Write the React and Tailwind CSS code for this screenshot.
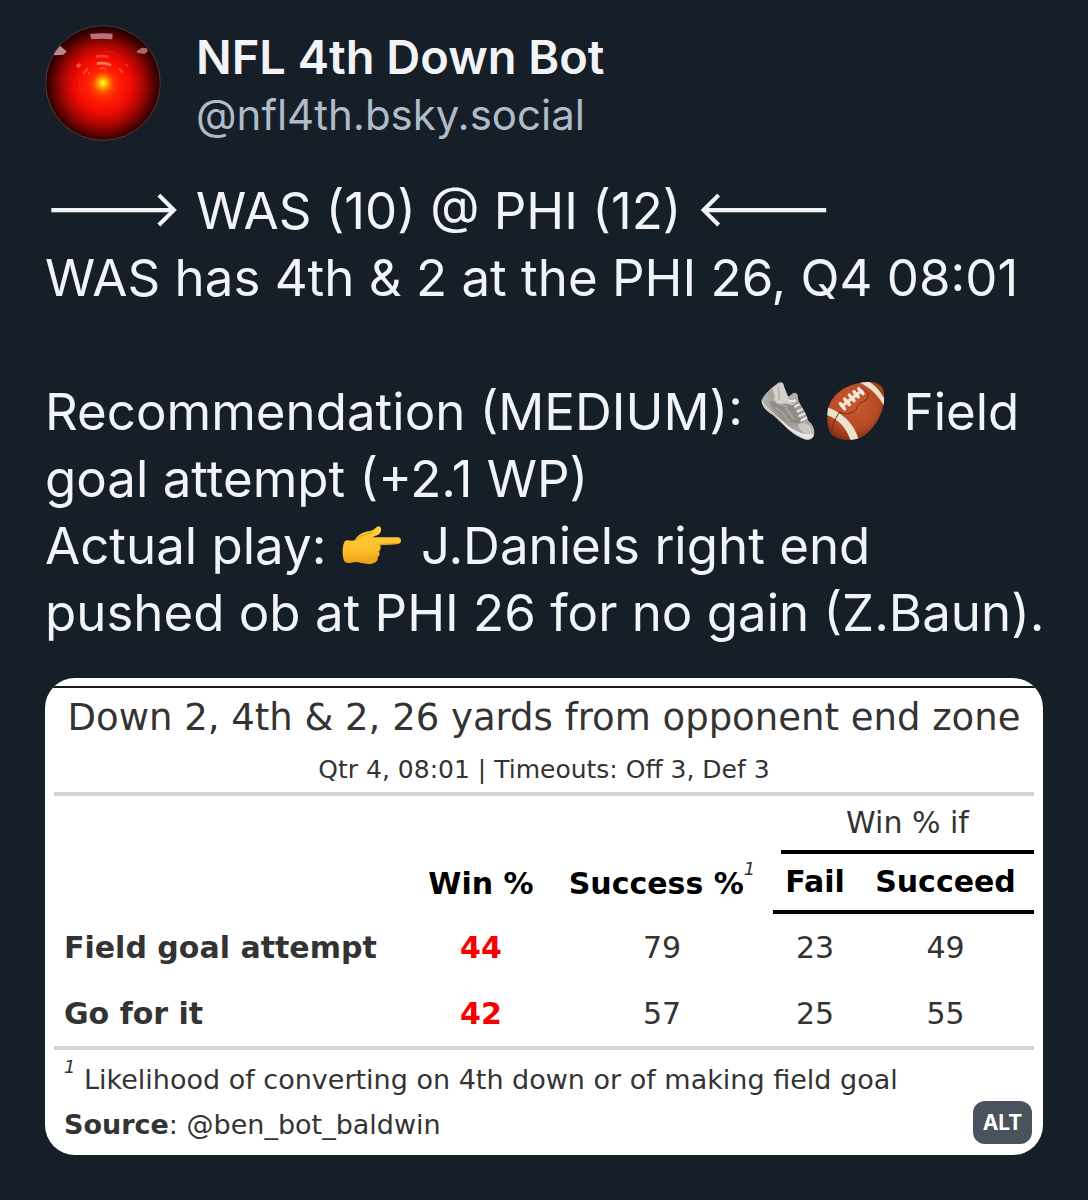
const rows = [
  { label: "Field goal attempt", win: 44, success: 79, fail: 23, succeed: 49 },
  { label: "Go for it", win: 42, success: 57, fail: 25, succeed: 55 },
];

function Avatar() {
  return (
    <svg viewBox="0 0 348 348" className="size-[116px] shrink-0" role="img" aria-label="NFL 4th Down Bot avatar">
      <defs>
        <radialGradient id="eye" cx="174" cy="180" r="178" gradientUnits="userSpaceOnUse">
          <stop offset="0" stopColor="#ff7a00" />
          <stop offset="0.12" stopColor="#ff4a00" />
          <stop offset="0.28" stopColor="#ff1c05" />
          <stop offset="0.48" stopColor="#ee0a03" />
          <stop offset="0.68" stopColor="#a80502" />
          <stop offset="0.87" stopColor="#4e0201" />
          <stop offset="1" stopColor="#180000" />
        </radialGradient>
        <radialGradient id="core" cx="174" cy="174" r="34" gradientUnits="userSpaceOnUse">
          <stop offset="0" stopColor="#ffff50" />
          <stop offset="0.25" stopColor="#ffd000" />
          <stop offset="0.6" stopColor="#ff8a00" stopOpacity="0.7" />
          <stop offset="1" stopColor="#ff5a00" stopOpacity="0" />
        </radialGradient>
        <clipPath id="disc">
          <circle cx="174" cy="174" r="172" />
        </clipPath>
        <filter id="soft" x="-20%" y="-20%" width="140%" height="140%">
          <feGaussianBlur stdDeviation="1.6" />
        </filter>
      </defs>
      <circle cx="174" cy="174" r="172" fill="url(#eye)" />
      <circle cx="174" cy="174" r="34" fill="url(#core)" />
      <g clipPath="url(#disc)" filter="url(#soft)">
        <path d="M135 27Q168 23 203 26L202 43Q169 40 139 43Z" fill="#b8707c" />
        <path d="M24 88L42 60L65 79L56 89L30 91Z" fill="#b98a8c" />
        <path d="M275 79L290 68L305 69L309 79L298 87L276 83Z" fill="#a5696a" />
        <path d="M154 91Q172 87 190 92V99Q172 96 152 99Z" fill="#ff3d2a" />
        <path d="M155 112Q178 106 199 117L197 124Q178 116 156 120Z" fill="#ff7a5c" />
        <path d="M163 131Q173 127 184 132" stroke="#ff5326" strokeWidth="5" fill="none" />
        <path d="M92 122L102 114L109 121L101 129Z" fill="#ff4d48" />
        <path d="M240 119L248 118L247 126Z" fill="#ee4340" />
        <path d="M116 146L128 130M130 149L134 142M222 131L234 143" stroke="#ff4c34" strokeWidth="5" fill="none" />
        <path d="M121 222A72 72 0 0 1 106 155M174 80Q204 78 226 92" stroke="#ff2a18" strokeWidth="3" fill="none" opacity="0.5" />
      </g>
      <circle cx="174" cy="174" r="172" fill="none" stroke="#503a42" strokeWidth="3" />
    </svg>
  );
}

function Shoe() {
  return (
    <svg viewBox="58 60 198 186" className="inline-block h-[62px] w-[66px] align-[-12px]" role="img" aria-label="Shoe">
      <defs>
        <linearGradient id="upper" x1="0" y1="0" x2="1" y2="1">
          <stop offset="0" stopColor="#c4c1be" />
          <stop offset="0.5" stopColor="#97928e" />
          <stop offset="1" stopColor="#bdb9b6" />
        </linearGradient>
      </defs>
      <path d="M72 120C80 103 99 84 122 68C132 64 139 69 139 79L151 108C158 113 159 98 172 98C181 99 180 111 183 123L202 157L212 182C229 195 235 217 226 231L200 236L142 197L94 150C80 139 73 129 72 120Z" fill="url(#upper)" />
      <path d="M104 84L128 69C136 67 138 74 139 82L151 111C157 120 174 115 178 126L166 136L142 130L120 134L106 112Z" fill="#d3d0ce" />
      <path d="M104 84L86 107L99 123L112 112Z" fill="#aaa5a1" />
      <path d="M121 80C126 91 121 104 126 120" stroke="#b4afac" strokeWidth="5" fill="none" />
      <path d="M152 111L170 99L179 103L182 126L169 134L154 126Z" fill="#b7b2af" />
      <path d="M94 124C112 120 125 142 144 133L169 136L196 188C178 194 154 186 139 170L104 143Z" fill="#918b87" />
      <path d="M113 143L134 157L155 185M144 143L168 178M122 132L148 140" stroke="#aaa4a0" strokeWidth="5" fill="none" />
      <path d="M181 196C190 184 207 188 217 199C227 212 226 222 217 223C202 222 186 211 181 196Z" fill="#cbc8c6" />
      <path d="M72 119C77 134 94 147 107 158L148 195C168 212 198 226 228 222C228 233 220 239 207 239C183 233 162 218 145 202L105 164C83 151 71 137 72 119Z" fill="#e8e6e4" />
      <path d="M75 131C83 147 102 157 119 174C145 203 173 229 207 239C215 239 223 236 226 230" stroke="#b0aaa6" strokeWidth="3" fill="none" />
      <path d="M155 122L163 124M168 124L172 121M172 140L184 134M179 154L193 148M185 168L201 161M191 182L206 173" stroke="#efedeb" strokeWidth="6" strokeLinecap="round" />
    </svg>
  );
}

function Football() {
  return (
    <svg viewBox="254 60 198 186" className="inline-block h-[62px] w-[66px] align-[-12px]" role="img" aria-label="American football">
      <defs>
        <radialGradient id="leather" cx="345" cy="130" r="125" gradientUnits="userSpaceOnUse">
          <stop offset="0" stopColor="#cb5b31" />
          <stop offset="0.6" stopColor="#b84a26" />
          <stop offset="1" stopColor="#74260f" />
        </radialGradient>
        <clipPath id="ball">
          <path d="M390 66C421 65 438 78 438 108C439 151 414 202 376 228C353 242 310 245 285 229C269 216 264 183 268 153C274 112 315 69 390 66Z" />
        </clipPath>
      </defs>
      <g clipPath="url(#ball)">
        <rect x="260" y="60" width="186" height="186" fill="url(#leather)" />
        <path d="M264 141C309 154 349 192 362 241L338 244C324 202 299 175 264 165Z" fill="#ece3cc" />
        <path d="M366 65L394 66C416 80 432 103 440 120V143C422 110 399 84 366 69Z" fill="#ece3cc" />
        <path d="M277 232C281 199 289 177 304 156C314 163 336 163 348 153C360 145 353 136 366 129C384 123 396 110 388 98C383 91 373 89 368 81" fill="none" stroke="#713017" strokeWidth="3" />
        <path d="M309 140L373 90" stroke="#e9decb" strokeWidth="10" />
        <path d="M306 131L319 147M319 117L333 134M333 105L347 122M347 95L360 111M361 86L374 101" stroke="#f3e9d9" strokeWidth="10" strokeLinecap="round" />
      </g>
    </svg>
  );
}

function PointRight() {
  return (
    <svg viewBox="63 12 198 186" className="inline-block h-[62px] w-[66px] align-[-12px]" role="img" aria-label="Pointing right">
      <defs>
        <linearGradient id="hand" x1="0" y1="0" x2="0" y2="1">
          <stop offset="0" stopColor="#ffcf3f" />
          <stop offset="0.65" stopColor="#fcbe28" />
          <stop offset="1" stopColor="#eb9c18" />
        </linearGradient>
      </defs>
      <path d="M74 94C83 86 94 96 105 90C116 68 137 65 153 62C164 60 170 48 177 49C187 51 184 67 178 72C173 77 163 77 158 82H235C246 84 246 101 234 102L181 106C183 113 182 120 177 124C180 132 179 139 173 142C174 150 171 155 164 158C150 165 132 161 112 156C99 155 88 163 76 157C66 148 65 111 74 94Z" fill="url(#hand)" />
      <path d="M109 89C119 75 138 73 155 68M178 103L234 101M174 124L178 123M168 142L173 141" fill="none" stroke="#dd921a" strokeWidth="3" strokeLinecap="round" />
    </svg>
  );
}

export default function App() {
  return (
    <main className="min-h-screen bg-[#161e27] px-[45px] pt-[25px] pb-[45px] font-['Inter',sans-serif] text-[#f1f3f6]">
      <article>
        <header className="flex items-start gap-[35px]">
          <Avatar />
          <div className="pt-[3px]">
            <h1 className="text-[47px] leading-[58px] font-semibold">NFL 4th Down Bot</h1>
            <a href="#profile" className="block text-[42px] leading-[58px] text-[#aebbc9]">
              @nfl4th.bsky.social
            </a>
          </div>
        </header>

        <div className="mt-[33px] text-[51px] leading-[67px] whitespace-nowrap">
          <p>{"---> WAS (10) @ PHI (12) <---"}</p>
          <p>WAS has 4th &amp; 2 at the PHI 26, Q4 08:01</p>
          <p className="mt-[67px]">
            Recommendation (MEDIUM): <Shoe />
            <Football /> Field
            <br />
            goal attempt (+2.1 WP)
          </p>
          <p>
            Actual play: <PointRight /> J.Daniels right end
            <br />
            pushed ob at PHI 26 for no gain (Z.Baun).
          </p>
        </div>

        <section className="relative mt-[32px] overflow-hidden rounded-[30px] bg-white pt-2 pb-2 font-['DejaVu_Sans',sans-serif] text-[#333333]">
          <div className="border-t-2 border-[#1a1a1a] text-center whitespace-nowrap">
            <h2 className="text-[37px] leading-[60px]">Down 2, 4th &amp; 2, 26 yards from opponent end zone</h2>
            <p className="text-[25px] leading-[44px]">Qtr 4, 08:01 | Timeouts: Off 3, Def 3</p>
          </div>
          <div className="mx-[9px]">
            <table className="w-full table-fixed border-separate border-spacing-0 border-y-4 border-[#d3d3d3] text-center text-[30px] whitespace-nowrap">
              <colgroup>
                <col />
                <col className="w-[140px]" />
                <col className="w-[222px]" />
                <col className="w-[84px]" />
                <col className="w-[177px]" />
              </colgroup>
              <thead className="text-black">
                <tr>
                  <td colSpan={3} />
                  <th colSpan={2} scope="colgroup" className="p-0 pl-2 font-normal text-[#333333]">
                    <div className="h-[58px] border-b-4 border-black leading-[54px]">Win % if</div>
                  </th>
                </tr>
                <tr className="h-[60px] leading-[56px]">
                  <td />
                  <th scope="col" className="p-0 font-bold">Win %</th>
                  <th scope="col" className="p-0 font-bold">
                    Success %
                    <sup className="top-0 align-[19px] text-[18px] leading-none font-normal text-[#333333] italic">1</sup>
                  </th>
                  <th scope="col" className="border-b-4 border-black p-0 font-bold">Fail</th>
                  <th scope="col" className="border-b-4 border-black p-0 font-bold">Succeed</th>
                </tr>
              </thead>
              <tbody>
                {rows.map((row) => (
                  <tr key={row.label} className="h-[66px]">
                    <th scope="row" className="p-0 pl-[10px] text-left font-bold">{row.label}</th>
                    <td className="p-0 font-bold text-[#f80000]">{row.win}</td>
                    <td className="p-0">{row.success}</td>
                    <td className="p-0">{row.fail}</td>
                    <td className="p-0">{row.succeed}</td>
                  </tr>
                ))}
              </tbody>
            </table>
            <div className="px-[10px] text-[27px] leading-[45px] whitespace-nowrap">
              <p className="pt-[7px]">
                <sup className="top-0 align-[16px] text-[18px] leading-none italic">1</sup> Likelihood of converting on 4th down or of making field goal
              </p>
              <p>
                <strong>Source</strong>: @ben_bot_baldwin
              </p>
            </div>
          </div>
          <button
            type="button"
            className="absolute right-[11px] bottom-[11px] h-[43px] w-[59px] rounded-xl bg-[#4a525d] font-['Inter',sans-serif] text-[21px] font-bold text-white"
          >
            ALT
          </button>
        </section>
      </article>
    </main>
  );
}
